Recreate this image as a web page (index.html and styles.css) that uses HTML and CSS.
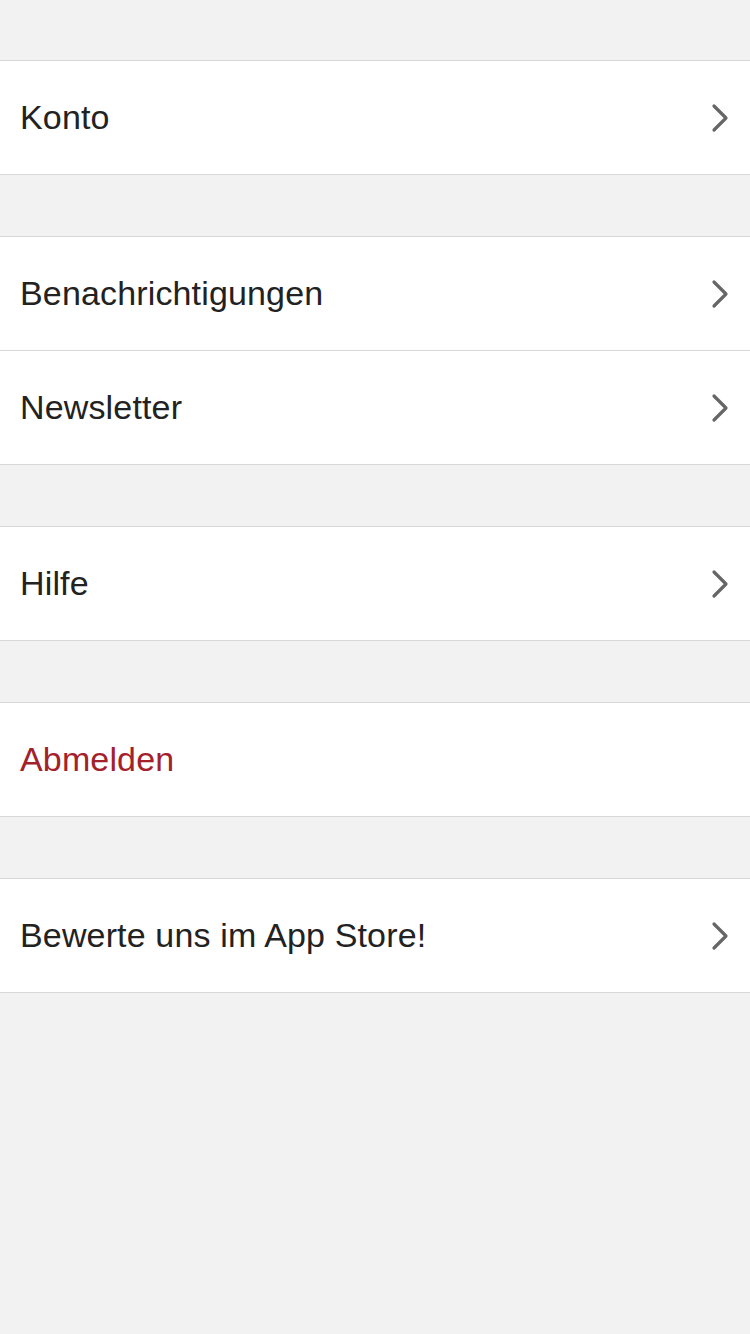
FILE: index.html
```html
<!DOCTYPE html>
<html lang="de">
<head>
<meta charset="utf-8">
<title>Einstellungen</title>
<link rel="stylesheet" href="styles.css">
</head>
<body>
<main class="settings">
  <section class="group">
    <div class="row"><span class="label">Konto</span><svg class="chev" viewBox="0 0 18 30" width="18" height="30"><path d="M3 3 L15 15 L3 27"/></svg></div>
  </section>
  <section class="group">
    <div class="row"><span class="label">Benachrichtigungen</span><svg class="chev" viewBox="0 0 18 30" width="18" height="30"><path d="M3 3 L15 15 L3 27"/></svg></div>
    <div class="row"><span class="label">Newsletter</span><svg class="chev" viewBox="0 0 18 30" width="18" height="30"><path d="M3 3 L15 15 L3 27"/></svg></div>
  </section>
  <section class="group">
    <div class="row"><span class="label">Hilfe</span><svg class="chev" viewBox="0 0 18 30" width="18" height="30"><path d="M3 3 L15 15 L3 27"/></svg></div>
  </section>
  <section class="group">
    <div class="row"><span class="label danger">Abmelden</span></div>
  </section>
  <section class="group">
    <div class="row"><span class="label">Bewerte uns im App Store!</span><svg class="chev" viewBox="0 0 18 30" width="18" height="30"><path d="M3 3 L15 15 L3 27"/></svg></div>
  </section>
</main>
</body>
</html>
```

FILE: styles.css
```css
html, body {
  margin: 0;
  padding: 0;
  background: #f2f2f2;
  height: 100%;
}
body {
  font-family: "Liberation Sans", Arial, sans-serif;
}
.settings {
  display: flex;
  flex-direction: column;
  gap: 61px;
  padding-top: 60px;
}
.group {
  background: #ffffff;
  border-top: 1px solid #d8d8d8;
}
.row {
  height: 113px;
  border-bottom: 1px solid #d8d8d8;
  display: flex;
  align-items: center;
  justify-content: space-between;
  padding: 0 21px 0 20px;
}
.label {
  font-size: 34px;
  letter-spacing: 0.15px;
  color: #222222;
}
.label.danger {
  color: #a3212b;
}
.chev {
  display: block;
}
.chev path {
  fill: none;
  stroke: #666666;
  stroke-width: 3.2;
  stroke-linecap: round;
  stroke-linejoin: round;
}
```
